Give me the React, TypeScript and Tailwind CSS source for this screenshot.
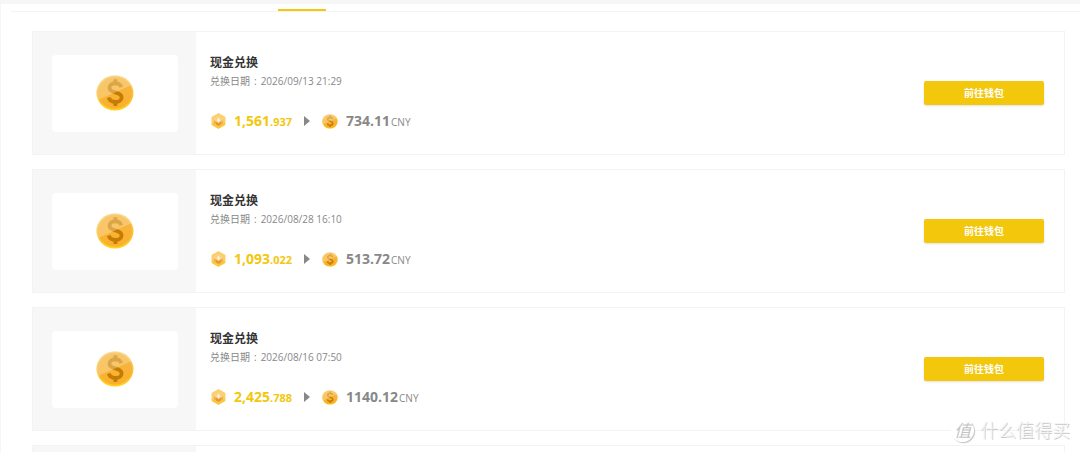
import React from "react";

type Exchange = {
  date: string;
  whole: string;
  fraction: string;
  cash: string;
};

const exchanges: Exchange[] = [
  { date: "2026/09/13 21:29", whole: "1,561", fraction: ".937", cash: "734.11" },
  { date: "2026/08/28 16:10", whole: "1,093", fraction: ".022", cash: "513.72" },
  { date: "2026/08/16 07:50", whole: "2,425", fraction: ".788", cash: "1140.12" },
];

function CoinIcon({ id, className }: { id: string; className: string }) {
  return (
    <svg viewBox="0 0 38 36" preserveAspectRatio="none" className={className} aria-hidden="true">
      <defs>
        <linearGradient id={`${id}-face`} x1="0" y1="0" x2="0" y2="1">
          <stop offset="0" stopColor="#f6b544" />
          <stop offset="1" stopColor="#fbb02c" />
        </linearGradient>
        <linearGradient id={`${id}-rim`} x1="0" y1="0" x2="0" y2="1">
          <stop offset="0" stopColor="#f9d382" />
          <stop offset="0.6" stopColor="#fbc02f" />
          <stop offset="1" stopColor="#ffd21c" />
        </linearGradient>
        <clipPath id={`${id}-clip`}>
          <ellipse cx="19" cy="18" rx="18.5" ry="17.6" />
        </clipPath>
      </defs>
      <ellipse cx="19" cy="18" rx="18.5" ry="17.6" fill={`url(#${id}-rim)`} />
      <ellipse cx="19" cy="17.8" rx="17" ry="16" fill={`url(#${id}-face)`} />
      <path
        d="M25.2 12.200C24.500 9.800 22.300 8.400 19.400 8.400c-3.500 0-5.900 1.600-5.900 4.300 0 2.700 2.300 3.700 5.900 4.700 3.900 1.100 6.200 2.100 6.200 5 0 2.900-2.600 4.600-6.100 4.600-3.500 0-6-1.600-6.800-4.400M19.400 4.200v4.500M19.400 26.500v4.500"
        fill="none"
        stroke="#c47c02"
        strokeWidth="3.8"
      />
      <path d="M0 0h38v9L0 26z" fill="#fbdfa6" fillOpacity="0.42" clipPath={`url(#${id}-clip)`} />
    </svg>
  );
}

function TokenIcon() {
  return (
    <svg viewBox="0 0 16 16" className="h-4 w-[17px]" aria-hidden="true">
      <path
        d="M8 1 14.200 4.400v7.200L8 15 1.800 11.600V4.400z"
        fill="#fbd06a"
        stroke="#fbd06a"
        strokeWidth="1.6"
        strokeLinejoin="round"
      />
      <path
        d="M2 10.500 8 13.600l6-3.100v1.100L8 15 2 11.600z"
        fill="#fdc63c"
        stroke="#fdc63c"
        strokeLinejoin="round"
      />
      <path d="M8 2.800 12.600 5.300v5.100L8 12.900 3.400 10.400V5.300z" fill="#f9d088" />
      <path d="M3.400 7.200 8 10.200l4.600-3v3.200L8 12.900 3.400 10.400z" fill="#f3ad42" />
      <path d="M8 10.200 10.500 8.600v2.900L8 12.900 5.500 11.500V8.600z" fill="#e59a30" />
      <path d="M8 4.600 9.800 7.600 8 9.400 6.200 7.600z" fill="#fff0cf" />
    </svg>
  );
}

function ExchangeCard({ item, id }: { item: Exchange; id: string }) {
  return (
    <article className="flex h-[124px] shrink-0 border border-[#f3f3f3] bg-white">
      <div className="flex w-[163px] shrink-0 items-center justify-center bg-[#f7f7f7]">
        <div className="flex h-[77px] w-[126px] items-center justify-center rounded bg-white">
          <CoinIcon id={`${id}-large`} className="h-9 w-[38px]" />
        </div>
      </div>
      <div className="flex min-w-0 flex-1 flex-col pt-[23px] pl-3.5">
        <h2 className="text-[12px] leading-4 font-bold text-[#333]">现金兑换</h2>
        <p className="mt-0.5 flex gap-1 text-[10px] leading-4 text-[#888]">
          <span>兑换日期</span>
          <span>:</span>
          <span>{item.date}</span>
        </p>
        <div className="mt-[22px] flex h-5 items-center">
          <TokenIcon />
          <p className="ml-[7px] text-[14px] leading-5 font-bold text-[#f3c70b]">
            {item.whole}
            <span className="text-[11px]">{item.fraction}</span>
          </p>
          <svg viewBox="0 0 6 10" className="ml-3 h-2.5 w-1.5" aria-hidden="true">
            <path d="M0 0 6 5 0 10z" fill="#888" />
          </svg>
          <CoinIcon id={`${id}-small`} className="ml-3 h-[15px] w-4" />
          <p className="ml-2 text-[14px] leading-5 font-bold text-[#888]">
            {item.cash}
            <span className="ml-px text-[10px] font-normal">CNY</span>
          </p>
        </div>
      </div>
      <div className="flex items-center pr-5">
        <button
          type="button"
          className="h-6 w-[120px] rounded-xs bg-[#f3c70b] text-[10px] font-bold text-white shadow-sm"
        >
          前往钱包
        </button>
      </div>
    </article>
  );
}

export default function App() {
  return (
    <div className="relative flex h-screen flex-col overflow-hidden border-t-4 border-l border-[#f6f6f6] bg-white font-['Open_Sans','Noto_Sans_CJK_SC',sans-serif]">
      <div className="ml-2.5 flex h-2 shrink-0 items-end border-b border-[#f3f3f3] pl-[267px]">
        <div className="h-0.5 w-12 bg-[#f3c70b]" />
      </div>
      <main className="mt-[19px] mr-[15px] ml-[31px] flex flex-col gap-3.5">
        {exchanges.map((item, index) => (
          <ExchangeCard key={item.date} item={item} id={`exchange-${index}`} />
        ))}
        <article className="flex h-[124px] shrink-0 border border-[#f3f3f3]">
          <div className="w-[163px] bg-[#f7f7f7]" />
        </article>
      </main>
      <div className="absolute right-2.5 bottom-2 flex items-center gap-1.5 font-light text-[#f4f4f4] [text-shadow:1px_1px_0_#c8c8c8]">
        <span className="flex size-[23px] items-center justify-center rounded-full bg-white text-[17px] leading-none font-normal text-[#c4c4c4] italic shadow-[1px_1px_1px_#c4c4c4] [text-shadow:none]">
          值
        </span>
        <span className="text-[18px] leading-7">什么值得买</span>
      </div>
    </div>
  );
}
